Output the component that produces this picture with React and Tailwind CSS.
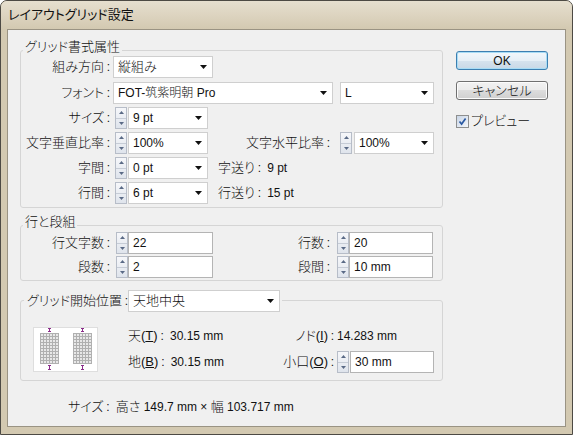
import React from "react";

const Arrow = () => (
  <svg width="7" height="4" viewBox="0 0 7 4" className="shrink-0">
    <path d="M0 0H7L3.5 4Z" fill="#111" />
  </svg>
);

const C = () => <span className="inline-block w-[9px] text-center text-[12px]">:</span>;

function Dropdown({ w, children }) {
  return (
    <div
      className={`flex h-[22px] shrink-0 items-center justify-between border border-[#cfcfcf] bg-white pl-[4px] pr-[5px] text-[12px] ${w}`}
    >
      <span className="whitespace-nowrap">{children}</span>
      <Arrow />
    </div>
  );
}

function Spinner() {
  return (
    <div className="flex h-[22px] w-[12px] shrink-0 flex-col border border-[#b7bdc8] bg-gradient-to-b from-[#f6f7fa] to-[#dfe4ec]">
      <div className="flex flex-1 items-center justify-center border-b border-[#c6ccd6]">
        <svg width="5" height="3" viewBox="0 0 5 3">
          <path d="M0 3L2.5 0L5 3Z" fill="#5a6a86" />
        </svg>
      </div>
      <div className="flex flex-1 items-center justify-center">
        <svg width="5" height="3" viewBox="0 0 5 3">
          <path d="M0 0H5L2.5 3Z" fill="#5a6a86" />
        </svg>
      </div>
    </div>
  );
}

function Input({ w, children }) {
  return (
    <div
      className={`flex h-[22px] shrink-0 items-center border border-[#b4b4b4] bg-white pl-[4px] text-[12px] ${w}`}
    >
      {children}
    </div>
  );
}

function Label({ w, children }) {
  return (
    <div className={`shrink-0 whitespace-nowrap text-right text-[13px] leading-[14px] ${w}`}>
      {children}
      <C />
    </div>
  );
}

function Legend({ children }) {
  return (
    <div className="-mt-[11px] ml-[2px] w-fit bg-[#f0f0f0] px-[2px] text-[13px] leading-[14px]">
      {children}
    </div>
  );
}

function Preview() {
  const cols = [7, 40];
  return (
    <svg width="65" height="45" viewBox="0 0 65 45" className="shrink-0">
      <rect x="0.5" y="0.5" width="64" height="44" fill="#ffffff" stroke="#dedede" />
      {cols.map((x0) => (
        <g key={x0}>
          <rect x={x0} y={6} width={19} height={31} fill="#e8e8e8" />
          {[0, 1, 2, 3, 4, 5, 6].map((i) => (
            <line
              key={"v" + i}
              x1={x0 + 0.5 + i * 3}
              y1={6}
              x2={x0 + 0.5 + i * 3}
              y2={37}
              stroke="#b0b0b0"
              strokeWidth="1"
            />
          ))}
          {[0, 1, 2, 3, 4, 5, 6, 7, 8, 9, 10].map((j) => (
            <line
              key={"h" + j}
              x1={x0}
              y1={6.5 + j * 3}
              x2={x0 + 19}
              y2={6.5 + j * 3}
              stroke="#b0b0b0"
              strokeWidth="1"
            />
          ))}
          <g stroke="#8a2d8a" strokeWidth="1">
            <line x1={x0 + 9.5} y1={1} x2={x0 + 9.5} y2={5} />
            <line x1={x0 + 8} y1={1.5} x2={x0 + 11} y2={1.5} />
            <line x1={x0 + 8} y1={4.5} x2={x0 + 11} y2={4.5} />
            <line x1={x0 + 9.5} y1={38} x2={x0 + 9.5} y2={43} />
            <line x1={x0 + 8} y1={38.5} x2={x0 + 11} y2={38.5} />
            <line x1={x0 + 8} y1={42.5} x2={x0 + 11} y2={42.5} />
          </g>
        </g>
      ))}
    </svg>
  );
}

export default function App() {
  return (
    <div className="h-[435px] w-[573px] overflow-hidden rounded-t-[7px] border border-[#4d4a44] bg-[#d3c9b1] font-['Liberation_Sans','Noto_Sans_CJK_JP',sans-serif] font-light text-[#111] [font-feature-settings:'palt']">
      {/* title bar */}
      <div className="flex h-[28px] items-center bg-gradient-to-b from-[#e6dfcf] via-[#ddd4c0] to-[#d3c9b1] pl-[7px] text-[13px] font-normal">
        レイアウトグリッド設定
      </div>

      {/* client */}
      <div className="mx-[6px] h-[398px] border border-[#9a9383] bg-[#f0f0f0]">
        <div className="flex">
          {/* left column */}
          <div className="ml-[12px] mt-[20px] w-[423px]">
            {/* section 1 */}
            <div className="rounded-[3px] border border-[#d5d5d5] pb-[3px]">
              <Legend>グリッド書式属性</Legend>
              <div className="mt-[2px] flex flex-col">
                <div className="flex h-[22px] items-center">
                  <Label w="w-[92px]">組み方向</Label>
                  <Dropdown w="w-[100px]">
                    <span className="text-[13px]">縦組み</span>
                  </Dropdown>
                </div>
                <div className="mt-[4px] flex h-[22px] items-center">
                  <Label w="w-[92px]">フォント</Label>
                  <Dropdown w="w-[220px]">FOT-筑紫明朝 Pro</Dropdown>
                  <div className="ml-[7px]">
                    <Dropdown w="w-[94px]">L</Dropdown>
                  </div>
                </div>
                <div className="mt-[3px] flex h-[22px] items-center">
                  <Label w="w-[92px]">サイズ</Label>
                  <div className="ml-[2px]">
                    <Spinner />
                  </div>
                  <div className="ml-[1px]">
                    <Dropdown w="w-[80px]">9 pt</Dropdown>
                  </div>
                </div>
                <div className="mt-[3px] flex h-[22px] items-center">
                  <Label w="w-[92px]">文字垂直比率</Label>
                  <div className="ml-[2px]">
                    <Spinner />
                  </div>
                  <div className="ml-[1px]">
                    <Dropdown w="w-[80px]">100%</Dropdown>
                  </div>
                  <Label w="w-[125px]">文字水平比率</Label>
                  <div className="ml-[7px]">
                    <Spinner />
                  </div>
                  <div className="ml-[2px]">
                    <Dropdown w="w-[80px]">100%</Dropdown>
                  </div>
                </div>
                <div className="mt-[3px] flex h-[22px] items-center">
                  <Label w="w-[92px]">字間</Label>
                  <div className="ml-[2px]">
                    <Spinner />
                  </div>
                  <div className="ml-[1px]">
                    <Dropdown w="w-[80px]">0 pt</Dropdown>
                  </div>
                  <div className="ml-[10px] whitespace-nowrap text-[12px]">
                    <span className="text-[13px]">字送り</span>
                    <C /> 9 pt
                  </div>
                </div>
                <div className="mt-[3px] flex h-[22px] items-center">
                  <Label w="w-[92px]">行間</Label>
                  <div className="ml-[2px]">
                    <Spinner />
                  </div>
                  <div className="ml-[1px]">
                    <Dropdown w="w-[80px]">6 pt</Dropdown>
                  </div>
                  <div className="ml-[10px] whitespace-nowrap text-[12px]">
                    <span className="text-[13px]">行送り</span>
                    <C /> 15 pt
                  </div>
                </div>
              </div>
            </div>

            {/* section 2 */}
            <div className="mt-[17px] rounded-[3px] border border-[#d5d5d5] pb-[2px]">
              <Legend>行と段組</Legend>
              <div className="mt-[3px] flex flex-col">
                <div className="flex h-[22px] items-center">
                  <Label w="w-[92px]">行文字数</Label>
                  <div className="ml-[3px]">
                    <Spinner />
                  </div>
                  <Input w="w-[85px]">22</Input>
                  <Label w="w-[120px]">行数</Label>
                  <div className="ml-[4px]">
                    <Spinner />
                  </div>
                  <Input w="w-[84px]">20</Input>
                </div>
                <div className="mt-[2px] flex h-[22px] items-center">
                  <Label w="w-[92px]">段数</Label>
                  <div className="ml-[3px]">
                    <Spinner />
                  </div>
                  <Input w="w-[85px]">2</Input>
                  <Label w="w-[120px]">段間</Label>
                  <div className="ml-[4px]">
                    <Spinner />
                  </div>
                  <Input w="w-[84px]">10 mm</Input>
                </div>
              </div>
            </div>

            {/* section 3 */}
            <div className="mt-[19px] rounded-[3px] border border-[#d5d5d5] pb-[7px]">
              <div className="-mt-[11px] ml-[3px] flex h-[22px] w-fit items-center bg-[#f0f0f0] pl-[3px] pr-[2px]">
                <div className="w-[101px] whitespace-nowrap text-[13px] leading-[14px]">
                  グリッド開始位置
                  <C />
                </div>
                <Dropdown w="w-[152px]">
                  <span className="text-[13px]">天地中央</span>
                </Dropdown>
              </div>
              <div className="mt-[13px] flex items-start">
                <div className="ml-[12px] mt-[2px]">
                  <Preview />
                </div>
                <div className="ml-[30px] grid grid-cols-[152px_57px_auto] grid-rows-[21px_22px] items-center gap-y-[5px] text-[12px]">
                  <div className="whitespace-nowrap">
                    <span className="text-[13px]">
                      天(<u className="underline-offset-1">T</u>)
                    </span>
                    <C /> 30.15 mm
                  </div>
                  <div className="whitespace-nowrap text-right text-[13px]">
                    ノド(<u className="underline-offset-1">I</u>)
                    <C />
                  </div>
                  <div className="whitespace-nowrap">14.283 mm</div>
                  <div className="whitespace-nowrap">
                    <span className="text-[13px]">
                      地(<u className="underline-offset-1">B</u>)
                    </span>
                    <C /> 30.15 mm
                  </div>
                  <div className="whitespace-nowrap text-right text-[13px]">
                    小口(<u className="underline-offset-1">O</u>)
                    <C />
                  </div>
                  <div className="flex items-center">
                    <Spinner />
                    <div className="ml-[1px]">
                      <Input w="w-[84px]">30 mm</Input>
                    </div>
                  </div>
                </div>
              </div>
            </div>

            <div className="mt-[19px] whitespace-nowrap pl-[48px] text-[12px] leading-[14px]">
              <span className="text-[13px]">サイズ</span>
              <C /> <span className="text-[13px]">高さ</span> 149.7 mm × <span className="text-[13px]">幅</span> 103.717 mm
            </div>
          </div>

          {/* right column */}
          <div className="ml-[13px] mt-[21px] flex w-[92px] flex-col">
            <button className="flex h-[19px] w-[92px] items-center justify-center rounded-[3px] border border-[#3c7fb1] bg-[linear-gradient(to_bottom,#f2f7fb,#e6eff6_50%,#d6e3ee_50%,#c9d8e6)] text-[12px] shadow-[inset_0_0_0_1px_#a8dcf5]">
              OK
            </button>
            <button className="mt-[11px] flex h-[19px] w-[92px] items-center justify-center rounded-[3px] border border-[#707070] bg-[linear-gradient(to_bottom,#f2f2f2,#ebebeb_50%,#dddddd_50%,#cfcfcf)] text-[13px] shadow-[inset_0_0_0_1px_#fcfcfc]">
              キャンセル
            </button>
            <div className="mt-[14px] flex items-center">
              <div className="flex h-[13px] w-[13px] items-center justify-center border border-[#8e8f8f] bg-gradient-to-br from-[#c9d5e6] to-[#f4f7fb]">
                <svg width="9" height="9" viewBox="0 0 9 9">
                  <path d="M1.5 4.5L3.6 7L7.6 1.5" stroke="#2b5aa3" strokeWidth="1.7" fill="none" />
                </svg>
              </div>
              <span className="ml-[2px] text-[13px] leading-[14px]">プレビュー</span>
            </div>
          </div>
        </div>
      </div>
    </div>
  );
}
